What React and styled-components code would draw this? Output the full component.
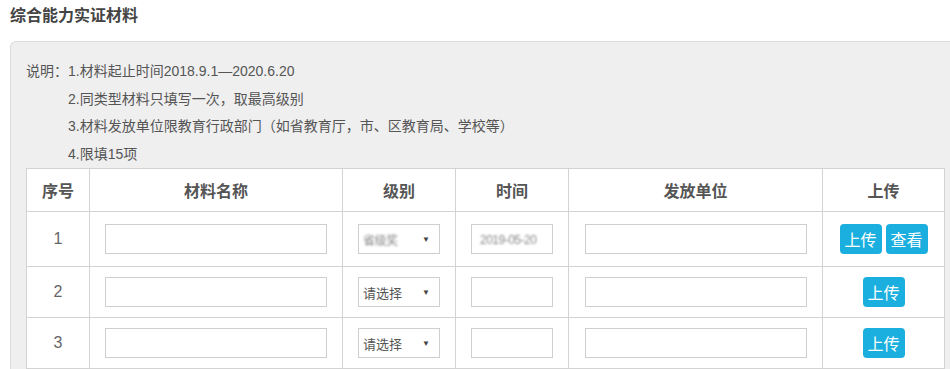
import React from "react";
import styled, { createGlobalStyle } from "styled-components";

const GlobalStyle = createGlobalStyle`
  html, body {
    margin: 0;
    padding: 0;
    background: #fff;
    overflow: hidden;
  }
  body {
    font-family: "Liberation Sans", "Noto Sans CJK SC", sans-serif;
    color: #555;
  }
`;

const Page = styled.div`
  width: 950px;
  height: 369px;
  overflow: hidden;
`;

const Title = styled.h2`
  margin: 0;
  padding: 5px 0 0 10px;
  height: 41px;
  box-sizing: border-box;
  font-size: 16px;
  font-weight: bold;
  color: #444;
  line-height: 22px;
`;

const Panel = styled.div`
  margin-left: 10px;
  width: 960px;
  background: #efefef;
  border: 1px solid #dcdcdc;
  border-right: none;
  border-radius: 6px 0 0 0;
  padding: 16px 0 0 15px;
  box-sizing: border-box;
`;

const Notes = styled.div`
  font-size: 14px;
  line-height: 27.5px;
  color: #555;
`;

const NoteLine = styled.div`
  padding-left: ${(p) => (p.indent ? "42px" : "0")};
`;

const Table = styled.table`
  width: 918px;
  table-layout: fixed;
  border-collapse: collapse;
  background: #fff;
`;

const Th = styled.th`
  height: 42px;
  border: 1px solid #d3d3d3;
  font-size: 16px;
  font-weight: bold;
  color: #555;
  text-align: center;
  padding: 0;
`;

const Td = styled.td`
  height: ${(p) => p.h}px;
  border: 1px solid #d3d3d3;
  text-align: center;
  vertical-align: middle;
  padding: 0;
  font-size: 16px;
  color: #666;
`;

const TextBox = styled.div`
  display: inline-block;
  vertical-align: middle;
  width: ${(p) => p.w}px;
  height: 30px;
  border: 1px solid #cfcfcf;
  box-sizing: border-box;
  background: #fff;
  text-align: left;
  line-height: 28px;
  padding-left: 8px;
  overflow: hidden;
`;

const Blurred = styled.span`
  color: #888;
  font-size: 12px;
  filter: blur(1.3px);
  letter-spacing: -0.5px;
`;

const SelectBox = styled.div`
  display: inline-flex;
  align-items: center;
  justify-content: space-between;
  vertical-align: middle;
  width: 82px;
  height: 30px;
  border: 1px solid #cfcfcf;
  box-sizing: border-box;
  background: #fff;
  padding: 0 9px 0 4px;
  font-size: 13px;
  color: #555;
`;

const Arrow = styled.span`
  font-size: 8px;
  color: #444;
`;

const Buttons = styled.div`
  display: flex;
  justify-content: center;
  gap: 4px;
`;

const Button = styled.button`
  width: 42px;
  height: 30px;
  border: none;
  border-radius: 4px;
  background: #1bafe0;
  color: #fff;
  font-family: "Noto Sans CJK SC", sans-serif;
  font-size: 16px;
  padding: 0;
  cursor: pointer;
`;

const rows = [
  { no: 1, h: 54, filled: true },
  { no: 2, h: 50 },
  { no: 3, h: 50 },
];

const widths = [63, 253, 113, 113, 254, 122];

export default function App() {
  return (
    <Page>
      <GlobalStyle />
      <Title>综合能力实证材料</Title>
      <Panel>
        <Notes>
          <NoteLine>说明：1.材料起止时间2018.9.1—2020.6.20</NoteLine>
          <NoteLine indent>2.同类型材料只填写一次，取最高级别</NoteLine>
          <NoteLine indent>3.材料发放单位限教育行政部门（如省教育厅，市、区教育局、学校等）</NoteLine>
          <NoteLine indent>4.限填15项</NoteLine>
        </Notes>
        <Table>
          <colgroup>
            {widths.map((w, i) => (
              <col key={i} style={{ width: w }} />
            ))}
          </colgroup>
          <thead>
            <tr>
              <Th>序号</Th>
              <Th>材料名称</Th>
              <Th>级别</Th>
              <Th>时间</Th>
              <Th>发放单位</Th>
              <Th>上传</Th>
            </tr>
          </thead>
          <tbody>
            {rows.map((r) => (
              <tr key={r.no}>
                <Td h={r.h}>{r.no}</Td>
                <Td h={r.h}>
                  <TextBox w={222} />
                </Td>
                <Td h={r.h}>
                  <SelectBox>
                    {r.filled ? <Blurred>省级奖</Blurred> : <span>请选择</span>}
                    <Arrow>▼</Arrow>
                  </SelectBox>
                </Td>
                <Td h={r.h}>
                  <TextBox w={82}>
                    {r.filled && <Blurred>2019-05-20</Blurred>}
                  </TextBox>
                </Td>
                <Td h={r.h}>
                  <TextBox w={222} />
                </Td>
                <Td h={r.h}>
                  <Buttons>
                    <Button>上传</Button>
                    {r.filled && <Button>查看</Button>}
                  </Buttons>
                </Td>
              </tr>
            ))}
          </tbody>
        </Table>
      </Panel>
    </Page>
  );
}
